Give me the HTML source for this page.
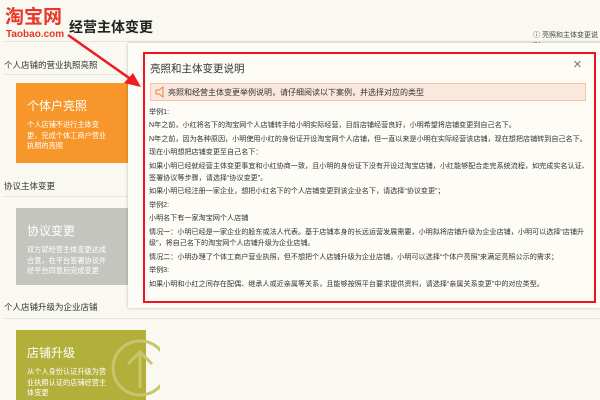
<!DOCTYPE html>
<html><head><meta charset="utf-8"><style>
*{margin:0;padding:0;box-sizing:border-box}
body{width:600px;height:400px;overflow:hidden;background:#f9f8f1;font-family:"Liberation Sans","Noto Sans CJK SC",sans-serif;position:relative;color:#333}
.abs{position:absolute}
.sec{position:absolute;left:4px;font-size:8.5px;color:#333}
.line{position:absolute;left:4px;width:600px;height:1px;background:#e6e5de}
.card{position:absolute;left:16px;width:130px;color:#fff;padding:14px 0 0 11px;overflow:hidden}
.card h3{font-size:12px;font-weight:normal;margin-bottom:6px}
.card p{font-size:7.2px;line-height:10.5px;width:81px}
.modal{position:absolute;left:128px;top:43px;width:472px;height:265px;background:#fdfcf6;box-shadow:0 0 3px rgba(0,0,0,.25)}
.red{position:absolute;left:143px;top:52px;width:453px;height:251px;border:2px solid #f0141e}
.txt{position:absolute;left:149px;top:107px;width:442px;font-size:7.1px;color:#333}
.txt p{line-height:11.8px;margin-bottom:1.7px}
</style></head><body>
<div class="abs" style="left:5px;top:8px;font-size:19px;font-weight:bold;color:#e8362a;line-height:20px">淘宝网</div>
<div class="abs" style="left:6px;top:29px;font-size:10px;font-weight:bold;color:#e8362a">Taobao.com</div>
<div class="abs" style="left:69px;top:17px;font-size:14px;font-weight:bold;color:#222">经营主体变更</div>
<div class="abs" style="left:533px;top:30px;font-size:7px;color:#444">ⓘ 亮照和主体变更说明</div>
<div class="line" style="top:41px"></div>

<div class="sec" style="top:59px">个人店铺的营业执照亮照</div>
<div class="line" style="top:74px"></div>
<div class="card" style="top:83px;height:80px;background:#f7962a"><h3>个体户亮照</h3><p>个人店铺不进行主体变更，完成个体工商户营业执照的亮照</p></div>
<div class="sec" style="top:180px">协议主体变更</div>
<div class="line" style="top:196px"></div>
<div class="card" style="top:208px;height:77px;background:#c4c5bf"><h3>协议变更</h3><p>双方就经营主体变更达成合意，在平台签署协议并经平台同意后完成变更</p></div>
<div class="sec" style="top:301px">个人店铺升级为企业店铺</div>
<div class="line" style="top:318px"></div>
<div class="card" style="top:330px;height:70px;background:#b3af3b"><h3>店铺升级</h3><p>从个人身份认证升级为营业执照认证的店铺经营主体变更</p></div>
<svg class="abs" style="left:100px;top:330px" width="60" height="70"><circle cx="40" cy="38" r="27" fill="none" stroke="#c9c56c" stroke-width="3"/><path d="M40 58V22M28 34L40 22L52 34" fill="none" stroke="#c9c56c" stroke-width="3"/></svg>

<div class="modal"></div>
<div class="red"></div>
<div class="abs" style="left:150px;top:61px;font-size:10.5px;color:#333">亮照和主体变更说明</div>
<div class="abs" style="left:573px;top:56px;font-size:15px;color:#777;font-weight:300">×</div>
<div class="abs" style="left:150px;top:83px;width:436px;height:18px;background:#fbe8dc;border:1px solid #f6c4ad"></div>
<svg class="abs" style="left:154px;top:86px" width="12" height="12"><path d="M2 4h3l4-3v10l-4-3H2z" fill="none" stroke="#f08050" stroke-width="1"/></svg>
<div class="abs" style="left:168px;top:87px;font-size:8px;color:#333">亮照和经营主体变更举例说明，请仔细阅读以下案例，并选择对应的类型</div>
<div class="txt">
<p>举例1:</p>
<p>N年之前，小红将名下的淘宝网个人店铺转手给小明实际经营，目前店铺经营良好，小明希望将店铺变更到自己名下。</p>
<p>N年之前，因为各种原因，小明使用小红的身份证开设淘宝网个人店铺，但一直以来是小明在实际经营该店铺，现在想把店铺转到自己名下。</p>
<p>现在小明想把店铺变更至自己名下：</p>
<p>如果小明已经就经营主体变更事宜和小红协商一致，且小明的身份证下没有开设过淘宝店铺，小红能够配合走完系统流程，如完成实名认证、签署协议等步骤，请选择“协议变更”。</p>
<p>如果小明已经注册一家企业，想把小红名下的个人店铺变更到该企业名下，请选择“协议变更”；</p>
<p>举例2:</p>
<p>小明名下有一家淘宝网个人店铺</p>
<p>情况一：小明已经是一家企业的股东或法人代表。基于店铺本身的长远运营发展需要，小明拟将店铺升级为企业店铺，小明可以选择“店铺升级”，将自己名下的淘宝网个人店铺升级为企业店铺。</p>
<p>情况二：小明办理了个体工商户营业执照，但不想把个人店铺升级为企业店铺，小明可以选择“个体户亮照”来满足亮照公示的需求；</p>
<p>举例3:</p>
<p>如果小明和小红之间存在配偶、继承人或近亲属等关系，且能够按照平台要求提供资料，请选择“亲属关系变更”中的对应类型。</p>
</div>
<svg class="abs" style="left:0;top:0" width="600" height="400"><line x1="68" y1="35" x2="132" y2="80" stroke="#ee1c24" stroke-width="2.5"/><path d="M141 87L124 83L133 73Z" fill="#ee1c24"/></svg>
</body></html>
